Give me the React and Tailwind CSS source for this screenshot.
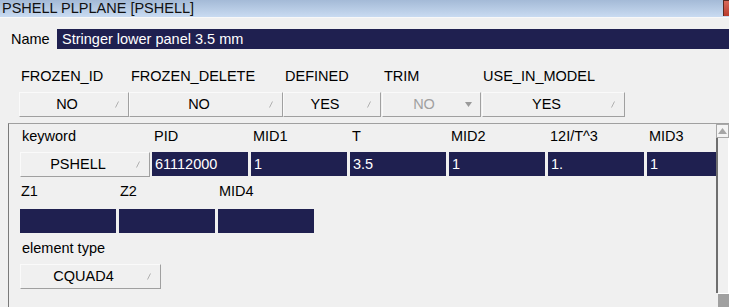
import React from "react";

const Grip = () => (
  <svg width="4" height="7" viewBox="0 0 4 7" className="shrink-0 ml-[1px] mr-[9px]">
    <line x1="0.5" y1="6.5" x2="3.5" y2="0.5" stroke="#b0b0b0" strokeWidth="1" />
  </svg>
);

const Arrow = () => (
  <svg width="7" height="5" viewBox="0 0 7 5" className="shrink-0 mr-[8px]">
    <polygon points="0,0 7,0 3.5,5" fill="#9a9a9a" />
  </svg>
);

function Btn({ className, label, disabled, arrow }) {
  return (
    <div
      className={
        "h-[25px] flex items-center shrink-0 bg-[#f0f0f0] border-t border-l border-t-[#fafafa] border-l-[#fafafa] border-b border-r border-b-[#a0a0a0] border-r-[#a0a0a0] " +
        className
      }
    >
      <span className={"flex-1 text-center leading-none " + (disabled ? "text-[#a0a0a0]" : "text-black")}>
        {label}
      </span>
      {arrow ? <Arrow /> : <Grip />}
    </div>
  );
}

function Field({ value, className = "" }) {
  return (
    <div className={"h-[24px] w-[96px] shrink-0 bg-[#1f2050] text-white pl-[3px] flex items-center leading-none " + className}>
      {value}
    </div>
  );
}

function Label({ children, className = "" }) {
  return <div className={"shrink-0 leading-none " + className}>{children}</div>;
}

export default function App() {
  return (
    <div className="w-[729px] h-[307px] overflow-hidden bg-[#f0f0f0] text-black text-[14.5px] font-['Liberation_Sans',Arial,sans-serif] flex flex-col">
      {/* Title bar */}
      <div className="h-[17px] shrink-0 flex bg-linear-to-b from-[#a4bad7] to-[#c9dbf1]">
        <div className="flex-1 pl-[2px] leading-[16px] text-[14.5px] text-[#111]">PSHELL PLPLANE [PSHELL]</div>
        <div className="w-[6px] h-[16px] border-l border-t border-[#5a2a22] bg-linear-to-b from-[#d96a5a] to-[#b8392b]" />
      </div>
      <div className="h-[1px] bg-[#f8f8f8] shrink-0" />

      {/* Name row */}
      <div className="mt-[11px] h-[20px] flex items-center shrink-0">
        <div className="w-[57px] pl-[11px] leading-none">Name</div>
        <div className="flex-1 h-[20px] bg-[#1f2050] text-white pl-[5px] flex items-center leading-none">
          Stringer lower panel 3.5 mm
        </div>
      </div>

      {/* Attribute labels */}
      <div className="mt-[19px] h-[16px] flex items-center shrink-0">
        <Label className="ml-[21px] w-[110px]">FROZEN_ID</Label>
        <Label className="w-[154px]">FROZEN_DELETE</Label>
        <Label className="w-[99px]">DEFINED</Label>
        <Label className="w-[99px]">TRIM</Label>
        <Label>USE_IN_MODEL</Label>
      </div>

      {/* Attribute buttons */}
      <div className="mt-[8px] flex shrink-0">
        <Btn className="ml-[19px] w-[110px]" label="NO" />
        <Btn className="w-[154px]" label="NO" />
        <Btn className="w-[98px]" label="YES" />
        <Btn className="ml-[1px] w-[99px]" label="NO" disabled arrow />
        <Btn className="ml-[1px] w-[143px]" label="YES" />
      </div>

      {/* Panel */}
      <div className="mt-[6px] ml-[8px] flex-1 flex border-t border-l border-t-[#a0a0a0] border-l-[#7a7a7a] min-h-0">
        <div className="flex-1 overflow-hidden pl-[11px] pt-[4px] min-w-0">
          {/* row 1 labels */}
          <div className="h-[16px] flex items-center">
            <Label className="w-[132px] pl-[2px]">keyword</Label>
            <Label className="w-[99px] pl-[2px]">PID</Label>
            <Label className="w-[99px] pl-[2px]">MID1</Label>
            <Label className="w-[99px] pl-[2px]">T</Label>
            <Label className="w-[99px] pl-[2px]">MID2</Label>
            <Label className="w-[99px] pl-[2px]">12I/T^3</Label>
            <Label className="w-[99px] pl-[2px]">MID3</Label>
          </div>
          {/* row 1 fields */}
          <div className="mt-[8px] flex">
            <Btn className="w-[130px] h-[24px]" label="PSHELL" />
            <div className="ml-[2px] flex gap-[3px]">
              <Field value="61112000" />
              <Field value="1" />
              <Field value="3.5" />
              <Field value="1" />
              <Field value="1." />
              <Field value="1" />
            </div>
          </div>

          {/* row 2 labels */}
          <div className="mt-[6px] h-[16px] flex items-center">
            <Label className="w-[99px] pl-[1px]">Z1</Label>
            <Label className="w-[99px] pl-[1px]">Z2</Label>
            <Label className="w-[99px] pl-[1px]">MID4</Label>
          </div>
          {/* row 2 fields */}
          <div className="mt-[10px] flex gap-[3px]">
            <Field value="" />
            <Field value="" />
            <Field value="" />
          </div>

          {/* element type */}
          <div className="mt-[7px] h-[16px] flex items-center">
            <Label className="pl-[2px]">element type</Label>
          </div>
          <div className="mt-[8px] flex">
            <Btn className="w-[141px] h-[24px]" label="CQUAD4" />
          </div>
        </div>

        {/* Scrollbar */}
        <div className="w-[13px] shrink-0 flex flex-col">
          <div className="h-[14px] shrink-0 bg-[#f4f4f4] border border-[#a8a8a8] flex items-center justify-center">
            <svg width="9" height="6" viewBox="0 0 9 6">
              <polygon points="4.5,0 9,6 0,6" fill="#a6a6a6" />
            </svg>
          </div>
          <div className="flex-1 border-l-2 border-l-[#6e6e6e] border-r border-r-white bg-[#f0f0f0]" />
          <div className="h-[14px] shrink-0 ml-[2px] bg-[#a0a0a0] border-t border-t-white" />
        </div>
      </div>
    </div>
  );
}
